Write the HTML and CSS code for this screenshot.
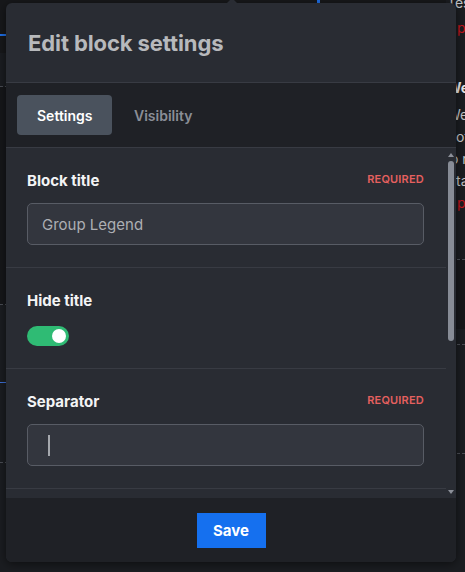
FILE: index.html
```html
<!DOCTYPE html>
<html>
<head>
<meta charset="utf-8">
<link rel="stylesheet" href="styles.css">
</head>
<body>
<div class="page">
  <div class="main">
    <div class="topbar"><span class="tab-mark"></span><span class="tab-mark right"></span></div>
    <div class="row r1"></div>
    <div class="row r2"></div>
    <div class="row r3"><span class="blue-dash"></span></div>
    <div class="row r4"></div>
  </div>
  <div class="aside">
    <p class="txt first">Test</p>
    <p class="txt red top-red">plan</p>
    <p class="txt bold">Week</p>
    <p class="txt second">Week</p>
    <p class="txt l-of">of</p>
    <p class="txt l-or">o r</p>
    <p class="txt l-ta">ta</p>
    <p class="txt red">plan</p>
    <div class="aside-rows">
      <div class="arow a1"></div>
      <div class="arow a2"></div>
      <div class="arow a3"></div>
    </div>
  </div>
</div>

<div class="modal">
  <span class="caret"></span>
  <header class="modal-header">
    <h1 class="modal-title">Edit block settings</h1>
  </header>
  <nav class="tabs">
    <button class="tab active">Settings</button>
    <button class="tab">Visibility</button>
  </nav>
  <div class="content">
    <div class="scroll-inner">
      <section class="field">
        <div class="field-head">
          <span class="label">Block title</span>
          <span class="required">REQUIRED</span>
        </div>
        <div class="input"><span class="value">Group Legend</span></div>
      </section>
      <section class="field">
        <div class="field-head">
          <span class="label">Hide title</span>
        </div>
        <div class="toggle"><span class="knob"></span></div>
      </section>
      <section class="field">
        <div class="field-head">
          <span class="label">Separator</span>
          <span class="required">REQUIRED</span>
        </div>
        <div class="input"><span class="caret-line"></span></div>
      </section>
    </div>
    <div class="scrollbar">
      <span class="arrow up"></span>
      <span class="thumb"></span>
      <span class="arrow down"></span>
    </div>
  </div>
  <footer class="modal-footer">
    <button class="save">Save</button>
  </footer>
</div>
</body>
</html>
```

FILE: styles.css
```css
* { box-sizing: border-box; }
html, body { margin: 0; padding: 0; }
body {
  width: 465px;
  height: 572px;
  overflow: hidden;
  background: #1b1d21;
  font-family: Inter, "Noto Sans", sans-serif;
  position: relative;
}

/* backdrop */
.page { display: flex; height: 572px; }
.main { width: 446px; flex-shrink: 0; display: flex; flex-direction: column; }
.topbar { height: 53px; background: #17181b; position: relative; }
.tab-mark { display: block; position: absolute; left: 0; top: 34px; width: 8px; height: 2px; background: #1f6fe5; }
.tab-mark.right { left: 317px; top: 0; width: 3px; height: 3px; }
.row { border-bottom: 1px dashed #4a4d54; }
.r1 { height: 34px; }
.r2 { height: 218px; background: #16171a; }
.r3 { height: 78px; position: relative; }
.blue-dash { position: absolute; left: 0; bottom: -1px; width: 6px; height: 1px; background: #3d6fd6; }
.r4 { height: 80px; }

.aside { flex: 1; min-width: 0; padding-left: 1px; position: relative; }
.txt { margin: 0; font-size: 14px; line-height: 22px; color: #c3c5c9; white-space: nowrap; }
.txt.first { margin-top: -8px; }
.txt.red { color: #c4141b; padding-left: 10px; }
.txt.top-red { margin-top: 3px; }
.txt.bold { font-weight: 700; color: #e6e7e9; margin-top: 38px; }
.txt.second { margin-top: 5px; }
.txt.l-of { margin-left: 9px; }
.txt.l-or { margin-left: 3px; }
.txt.l-ta { margin-left: 9px; }
.aside-rows { margin-top: 45px; }
.a1 { height: 70px; background: #16171a; border-top: 1px dashed #4a4d54; }
.a2 { height: 16px; border-bottom: 1px dashed #4a4d54; }
.a3 { height: 109px; border-bottom: 1px dashed #4a4d54; }

/* modal */
.modal {
  position: absolute;
  left: 6px;
  top: 3px;
  width: 450px;
  height: 559px;
  background: #292c33;
  border-radius: 6px;
  display: flex;
  flex-direction: column;
  box-shadow: 0 2px 10px rgba(0,0,0,0.5);
}
.caret {
  position: absolute;
  left: 220px;
  top: -5px;
  width: 0; height: 0;
  border-left: 6px solid transparent;
  border-right: 6px solid transparent;
  border-bottom: 6px solid #292c33;
}
.modal-header {
  height: 80px;
  padding-left: 22px;
  display: flex;
  align-items: center;
  border-bottom: 1px solid #383b43;
  flex-shrink: 0;
}
.modal-title {
  margin: 0;
  font-size: 22px;
  font-weight: 700;
  color: #b7b9bc;
  letter-spacing: -0.1px;
}
.tabs {
  height: 65px;
  background: #1f2126;
  border-bottom: 1px solid #383b43;
  display: flex;
  align-items: center;
  padding-left: 11px;
  gap: 2px;
  flex-shrink: 0;
}
.tab {
  height: 40px;
  padding: 0 20px;
  border: none;
  border-radius: 4px;
  background: transparent;
  font-family: inherit;
  font-size: 14px;
  font-weight: 600;
  color: #8a8e96;
}
.tab.active {
  background: #4a525d;
  color: #ffffff;
  width: 95px;
}

.content {
  flex: 1;
  position: relative;
  overflow: hidden;
  background: #292c33;
}
.scroll-inner { width: 440px; }
.field {
  padding: 22px 22px 22px 21px;
  border-bottom: 1px solid #383b43;
}
.field-head {
  display: flex;
  justify-content: space-between;
  align-items: center;
  height: 20px;
}
.label {
  font-size: 15px;
  font-weight: 700;
  color: #f3f4f5;
}
.required {
  font-size: 11px;
  font-weight: 600;
  color: #e5605f;
  letter-spacing: 0.2px;
  margin-top: -2px;
}
.input {
  margin-top: 13px;
  height: 42px;
  border: 1px solid #585c65;
  border-radius: 5px;
  background: #33363e;
  display: flex;
  align-items: center;
  padding-left: 14px;
}
.value { font-size: 15px; color: #adafb3; }
.caret-line { display: block; width: 2px; height: 21px; background: #a5a8ad; margin-left: 6px; }
.toggle {
  margin-top: 16px;
  width: 42px;
  height: 20px;
  border-radius: 10px;
  background: #2fbb74;
  display: flex;
  align-items: center;
  justify-content: flex-end;
  padding-right: 3px;
}
.knob { width: 14px; height: 14px; border-radius: 50%; background: #ffffff; }

.scrollbar {
  position: absolute;
  right: 0;
  top: 0;
  bottom: 0;
  width: 10px;
  display: flex;
  flex-direction: column;
  align-items: center;
}
.arrow { width: 0; height: 0; border-left: 3.5px solid transparent; border-right: 3.5px solid transparent; }
.arrow.up { margin-top: 5px; border-bottom: 4px solid #8c9099; }
.arrow.down { margin-top: auto; margin-bottom: 4px; border-top: 4px solid #8c9099; }
.thumb { margin-top: 4px; width: 6px; height: 180px; border-radius: 3px; background: #878c96; }

.modal-footer {
  height: 64px;
  background: #1f2126;
  display: flex;
  justify-content: center;
  align-items: center;
  border-radius: 0 0 6px 6px;
  flex-shrink: 0;
}
.save {
  width: 69px;
  height: 35px;
  border: none;
  border-radius: 0;
  background: #1570ef;
  color: #ffffff;
  font-family: inherit;
  font-size: 15px;
  font-weight: 700;
}
```
